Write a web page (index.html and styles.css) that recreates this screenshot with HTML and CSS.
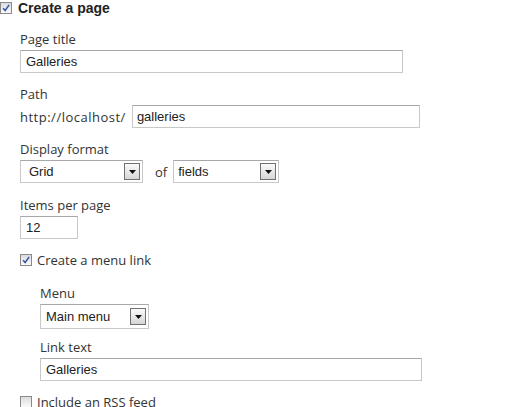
FILE: index.html
```html
<!DOCTYPE html>
<html>
<head>
<meta charset="utf-8">
<link rel="stylesheet" href="styles.css">
</head>
<body>
<div class="form">
  <div class="check-row heading">
    <span class="cb checked"><svg viewBox="0 0 12 12" width="12" height="12"><path d="M2.5 6.2 L5 9 L9.8 2.2" fill="none" stroke="#3355aa" stroke-width="1.8"/></svg></span>
    <span class="check-label bold">Create a page</span>
  </div>
  <div class="group">
    <div class="item">
      <div class="label">Page title</div>
      <div class="input w-title">Galleries</div>
    </div>
    <div class="item">
      <div class="label">Path</div>
      <div class="path-row">
        <span class="prefix">http://localhost/</span>
        <div class="input w-path">galleries</div>
      </div>
    </div>
    <div class="item item-format">
      <div class="label">Display format</div>
      <div class="path-row">
        <div class="select w-grid"><span class="sel-text">Grid</span><span class="btn"><svg viewBox="0 0 7 4" width="7" height="4"><path d="M0 0 H7 L3.5 4 Z" fill="#111"/></svg></span></div>
        <span class="of">of</span>
        <div class="select w-fields"><span class="sel-text">fields</span><span class="btn"><svg viewBox="0 0 7 4" width="7" height="4"><path d="M0 0 H7 L3.5 4 Z" fill="#111"/></svg></span></div>
      </div>
    </div>
    <div class="item">
      <div class="label">Items per page</div>
      <div class="input w-items">12</div>
    </div>
    <div class="check-row sub">
      <span class="cb checked"><svg viewBox="0 0 12 12" width="12" height="12"><path d="M2.5 6.2 L5 9 L9.8 2.2" fill="none" stroke="#3355aa" stroke-width="1.8"/></svg></span>
      <span class="check-label">Create a menu link</span>
    </div>
    <div class="group inner">
      <div class="item item-menu">
        <div class="label">Menu</div>
        <div class="select w-menu"><span class="sel-text">Main menu</span><span class="btn"><svg viewBox="0 0 7 4" width="7" height="4"><path d="M0 0 H7 L3.5 4 Z" fill="#111"/></svg></span></div>
      </div>
      <div class="item">
        <div class="label">Link text</div>
        <div class="input w-link">Galleries</div>
      </div>
    </div>
    <div class="check-row sub rss">
      <span class="cb"></span>
      <span class="check-label">Include an RSS feed</span>
    </div>
  </div>
</div>
</body>
</html>
```
FILE: styles.css
```css
html, body {
  margin: 0;
  padding: 0;
  background: #fff;
}
body {
  font-family: "Open Sans", "DejaVu Sans", sans-serif;
  font-size: 13px;
  color: #333;
  width: 515px;
  height: 407px;
  overflow: hidden;
}
.check-row {
  display: flex;
  align-items: center;
  height: 16px;
}
.heading {
  margin-bottom: 15px;
}
.cb {
  width: 12px;
  height: 12px;
  box-sizing: border-box;
  border: 1px solid #8a8a8a;
  background: linear-gradient(#dcdcdc, #fafafa);
  display: flex;
  align-items: center;
  justify-content: center;
  flex: none;
}
.cb svg {
  display: block;
}
.heading .cb {
  margin-right: 6px;
}
.bold {
  font-family: "Liberation Sans", Arial, sans-serif;
  font-weight: bold;
  font-size: 14px;
  color: #222;
}
.group {
  padding-left: 20px;
}
.group.inner {
  padding-left: 20px;
  margin-top: 17px;
}
.item {
  margin-bottom: 13px;
}
.item-format {
  margin-bottom: 14px;
}
.item-menu {
  margin-bottom: 10px;
}
.label {
  line-height: 17px;
  margin-bottom: 2px;
}
.input, .select {
  box-sizing: border-box;
  height: 23px;
  border: 1px solid #c8c8c8;
  border-top-color: #a8a8a8;
  font-family: "Liberation Sans", Arial, sans-serif;
  font-size: 13px;
  color: #222;
  line-height: 21px;
  padding: 0 5px;
  background: #fff;
}
.w-title { width: 383px; }
.w-path { width: 288px; padding-left: 4px; }
.w-items { width: 58px; }
.w-link { width: 382px; }
.path-row {
  display: flex;
  align-items: center;
}
.prefix {
  margin-right: 6px;
  letter-spacing: 0.5px;
}
.select {
  display: flex;
  align-items: center;
  justify-content: space-between;
  padding: 0 2px 0 8px;
}
.w-grid { width: 123px; }
.w-fields { width: 106px; padding-left: 4px; }
.w-menu { width: 109px; height: 25px; padding-left: 5px; }
.of {
  margin: 0 6px 0 12px;
}
.btn {
  width: 16px;
  height: 17px;
  box-sizing: border-box;
  border: 1px solid #707070;
  background: linear-gradient(#fafafa, #d6d6d6);
  display: flex;
  align-items: center;
  justify-content: center;
}
.btn svg { display: block; }
.sub {
  height: 16px;
  margin-top: 2px;
}
.sub .cb {
  margin-right: 5px;
}
.check-label {
  line-height: 16px;
}
.rss {
  margin-top: 6px;
}
```
